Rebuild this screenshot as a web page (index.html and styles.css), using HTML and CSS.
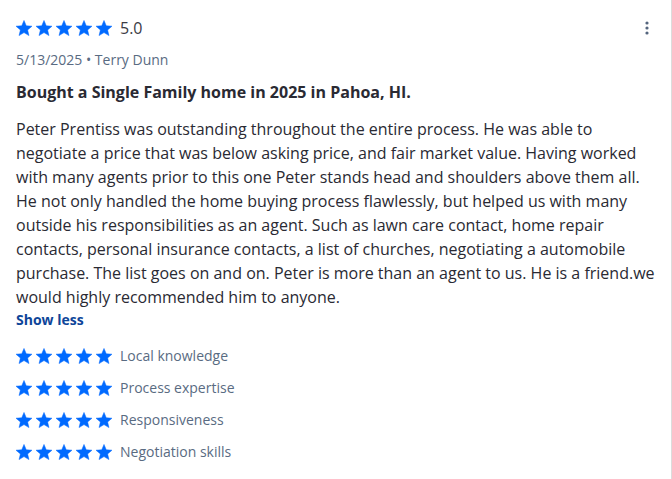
FILE: index.html
```html
<!DOCTYPE html>
<html>
<head>
<meta charset="utf-8">
<link rel="stylesheet" href="styles.css">
</head>
<body>
<svg width="0" height="0" class="defs">
  <defs>
    <symbol id="star" viewBox="2 1.5 20 20">
      <path d="M12 17.27L18.18 21l-1.64-7.03L22 9.24l-7.19-.61L12 2 9.19 8.63 2 9.24l5.46 4.73L5.82 21z" stroke-linejoin="round"/>
    </symbol>
  </defs>
</svg>
<div class="card">
  <div class="header">
    <div class="rating">
      <div class="stars">
        <svg class="star"><use href="#star"/></svg>
        <svg class="star"><use href="#star"/></svg>
        <svg class="star"><use href="#star"/></svg>
        <svg class="star"><use href="#star"/></svg>
        <svg class="star"><use href="#star"/></svg>
      </div>
      <span class="score">5.0</span>
    </div>
    <button class="kebab" aria-label="More">
      <svg width="4" height="14" viewBox="0 0 4 14"><circle cx="2" cy="2" r="1.6"/><circle cx="2" cy="7" r="1.6"/><circle cx="2" cy="12" r="1.6"/></svg>
    </button>
  </div>
  <div class="meta">5/13/2025 • Terry Dunn</div>
  <h3 class="title">Bought a Single Family home in 2025 in Pahoa, HI.</h3>
  <p class="body">Peter Prentiss was outstanding throughout the entire process. He was able to negotiate a price that was below asking price, and fair market value. Having worked with many agents prior to this one Peter stands head and shoulders above them all. He not only handled the home buying process flawlessly, but helped us with many outside his responsibilities as an agent. Such as lawn care contact, home repair contacts, personal insurance contacts, a list of churches, negotiating a automobile purchase. The list goes on and on. Peter is more than an agent to us. He is a friend.we would highly recommended him to anyone.</p>
  <a class="toggle" href="#">Show less</a>
  <ul class="subratings">
    <li class="sub"><div class="stars"><svg class="star"><use href="#star"/></svg><svg class="star"><use href="#star"/></svg><svg class="star"><use href="#star"/></svg><svg class="star"><use href="#star"/></svg><svg class="star"><use href="#star"/></svg></div><span class="label">Local knowledge</span></li>
    <li class="sub"><div class="stars"><svg class="star"><use href="#star"/></svg><svg class="star"><use href="#star"/></svg><svg class="star"><use href="#star"/></svg><svg class="star"><use href="#star"/></svg><svg class="star"><use href="#star"/></svg></div><span class="label">Process expertise</span></li>
    <li class="sub"><div class="stars"><svg class="star"><use href="#star"/></svg><svg class="star"><use href="#star"/></svg><svg class="star"><use href="#star"/></svg><svg class="star"><use href="#star"/></svg><svg class="star"><use href="#star"/></svg></div><span class="label">Responsiveness</span></li>
    <li class="sub"><div class="stars"><svg class="star"><use href="#star"/></svg><svg class="star"><use href="#star"/></svg><svg class="star"><use href="#star"/></svg><svg class="star"><use href="#star"/></svg><svg class="star"><use href="#star"/></svg></div><span class="label">Negotiation skills</span></li>
  </ul>
</div>
</body>
</html>
```
FILE: styles.css
```css
html, body {
  margin: 0;
  padding: 0;
  background: #fff;
}
body {
  font-family: "Open Sans", "Liberation Sans", sans-serif;
  color: #2a2a33;
}
.defs {
  position: absolute;
  width: 0;
  height: 0;
}
.card {
  box-sizing: border-box;
  width: 672px;
  height: 479px;
  padding: 16px 16px 0 16px;
  border-right: 1px solid #dcdcdc;
}
.header {
  display: flex;
  justify-content: space-between;
  align-items: center;
  height: 24px;
}
.rating {
  display: flex;
  align-items: center;
  gap: 8px;
}
.stars {
  display: flex;
  gap: 4px;
}
.star {
  width: 16px;
  height: 16px;
  fill: #006aff;
  stroke: #006aff;
  stroke-width: 0.6;
}
.score {
  font-size: 16px;
  line-height: 24px;
  color: #3b3b45;
}
.kebab {
  border: 0;
  background: none;
  padding: 0;
  margin-right: 6px;
  display: flex;
  fill: #54657e;
}
.meta {
  margin-top: 10px;
  font-size: 14px;
  line-height: 20px;
  color: #596b82;
}
.title {
  margin: 10px 0 0 0;
  font-size: 16px;
  line-height: 24px;
  font-weight: 700;
  color: #2a2a33;
}
.body {
  margin: 13px 0 0 0;
  font-size: 16px;
  line-height: 24px;
  color: #2a2a33;
}
.toggle {
  display: block;
  margin-top: 1px;
  font-size: 14px;
  line-height: 20px;
  font-weight: 700;
  color: #0d4599;
  text-decoration: none;
}
.subratings {
  list-style: none;
  margin: 14px 0 0 0;
  padding: 0;
  display: flex;
  flex-direction: column;
  gap: 8px;
}
.sub {
  display: flex;
  align-items: center;
  gap: 8px;
  height: 24px;
}
.label {
  font-size: 14px;
  line-height: 20px;
  color: #596b82;
}
```
